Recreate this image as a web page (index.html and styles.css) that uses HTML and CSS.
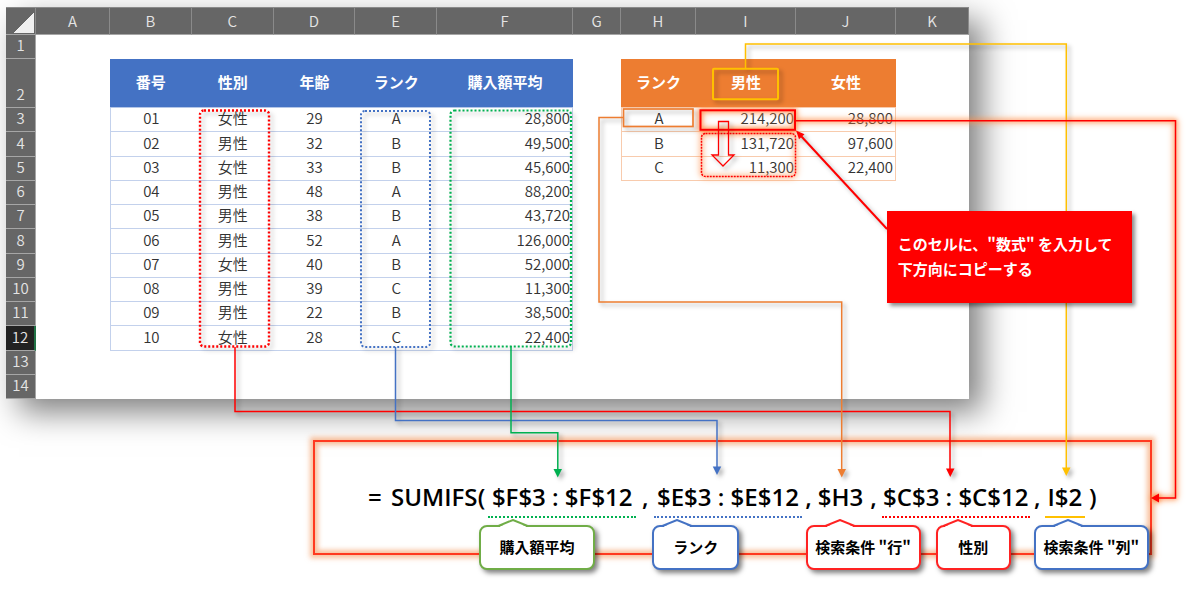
FILE: index.html
```html
<!DOCTYPE html>
<html lang="ja">
<head>
<meta charset="utf-8">
<title>SUMIFS 関数の解説</title>
<link rel="stylesheet" href="styles.css">
</head>
<body>
<main class="figure">
  <table class="sheet">
    <colgroup>
      <col class="w-head"><col class="w-a"><col class="w-b"><col class="w-b"><col class="w-b"><col class="w-b"><col class="w-f"><col class="w-g"><col class="w-h"><col class="w-i"><col class="w-i"><col class="w-k">
    </colgroup>
    <thead>
      <tr><th class="corner"></th><th>A</th><th>B</th><th>C</th><th>D</th><th>E</th><th>F</th><th>G</th><th>H</th><th>I</th><th>J</th><th>K</th></tr>
    </thead>
    <tbody>
      <tr><th>1</th><td></td><td></td><td></td><td></td><td></td><td></td><td></td><td></td><td></td><td></td><td></td></tr>
      <tr class="titles"><th>2</th><td></td><td class="blue">番号</td><td class="blue">性別</td><td class="blue">年齢</td><td class="blue">ランク</td><td class="blue">購入額平均</td><td></td><td class="orange">ランク</td><td class="orange">男性</td><td class="orange">女性</td><td></td></tr>
      <tr><th>3</th><td></td><td class="b first">01</td><td class="b">女性</td><td class="b">29</td><td class="b">A</td><td class="b num last">28,800</td><td></td><td class="o first">A</td><td class="o num">214,200</td><td class="o num last">28,800</td><td></td></tr>
      <tr><th>4</th><td></td><td class="b first">02</td><td class="b">男性</td><td class="b">32</td><td class="b">B</td><td class="b num last">49,500</td><td></td><td class="o first">B</td><td class="o num">131,720</td><td class="o num last">97,600</td><td></td></tr>
      <tr><th>5</th><td></td><td class="b first">03</td><td class="b">女性</td><td class="b">33</td><td class="b">B</td><td class="b num last">45,600</td><td></td><td class="o first">C</td><td class="o num">11,300</td><td class="o num last">22,400</td><td></td></tr>
      <tr><th>6</th><td></td><td class="b first">04</td><td class="b">男性</td><td class="b">48</td><td class="b">A</td><td class="b num last">88,200</td><td></td><td></td><td></td><td></td><td></td></tr>
      <tr><th>7</th><td></td><td class="b first">05</td><td class="b">男性</td><td class="b">38</td><td class="b">B</td><td class="b num last">43,720</td><td></td><td></td><td></td><td></td><td></td></tr>
      <tr><th>8</th><td></td><td class="b first">06</td><td class="b">男性</td><td class="b">52</td><td class="b">A</td><td class="b num last">126,000</td><td></td><td></td><td></td><td></td><td></td></tr>
      <tr><th>9</th><td></td><td class="b first">07</td><td class="b">女性</td><td class="b">40</td><td class="b">B</td><td class="b num last">52,000</td><td></td><td></td><td></td><td></td><td></td></tr>
      <tr><th>10</th><td></td><td class="b first">08</td><td class="b">男性</td><td class="b">39</td><td class="b">C</td><td class="b num last">11,300</td><td></td><td></td><td></td><td></td><td></td></tr>
      <tr><th>11</th><td></td><td class="b first">09</td><td class="b">男性</td><td class="b">22</td><td class="b">B</td><td class="b num last">38,500</td><td></td><td></td><td></td><td></td><td></td></tr>
      <tr><th class="current">12</th><td></td><td class="b first">10</td><td class="b">女性</td><td class="b">28</td><td class="b">C</td><td class="b num last">22,400</td><td></td><td></td><td></td><td></td><td></td></tr>
      <tr><th>13</th><td></td><td></td><td></td><td></td><td></td><td></td><td></td><td></td><td></td><td></td><td></td></tr>
      <tr><th>14</th><td></td><td></td><td></td><td></td><td></td><td></td><td></td><td></td><td></td><td></td><td></td></tr>
    </tbody>
  </table>

  <section class="formula">
    <span>=</span>
    <span>SUMIFS</span>
    <span class="open">(</span>
    <span class="arg line-green">$F$3 : $F$12
      <span class="note note-sum">購入額平均<svg class="tip" viewBox="0 0 30 9"><path class="tip-fill" d="M2 7.500L15 2L28 7.500V9H2z"/><path d="M0 7L15 1L30 7"/></svg></span>
    </span>
    <span class="comma">,</span>
    <span class="arg line-blue">$E$3 : $E$12
      <span class="note note-rank">ランク<svg class="tip" viewBox="0 0 30 9"><path class="tip-fill" d="M2 7.500L15 2L28 7.500V9H2z"/><path d="M0 7L15 1L30 7"/></svg></span>
    </span>
    <span class="comma">,</span>
    <span class="arg">$H3
      <span class="note note-row">検索条件 "行"<svg class="tip" viewBox="0 0 30 9"><path class="tip-fill" d="M2 7.500L15 2L28 7.500V9H2z"/><path d="M0 7L15 1L30 7"/></svg></span>
    </span>
    <span class="comma">,</span>
    <span class="arg line-red">$C$3 : $C$12
      <span class="note note-sex">性別<svg class="tip" viewBox="0 0 30 9"><path class="tip-fill" d="M2 7.500L15 2L28 7.500V9H2z"/><path d="M0 7L15 1L30 7"/></svg></span>
    </span>
    <span class="comma">,</span>
    <span class="arg line-gold">I$2
      <span class="note note-col">検索条件 "列"<svg class="tip" viewBox="0 0 30 9"><path class="tip-fill" d="M2 7.500L15 2L28 7.500V9H2z"/><path d="M0 7L15 1L30 7"/></svg></span>
    </span>
    <span class="close">)</span>
  </section>

  <svg class="links" viewBox="0 0 1200 590" preserveAspectRatio="none" aria-hidden="true">
    <g class="shadow">
      <rect class="dots red" x="200" y="110.500" width="69" height="236" rx="4" stroke-width="2.400"/>
      <rect class="dots blue-line" x="361" y="111" width="69" height="236" rx="4" stroke-width="2"/>
      <rect class="dots green" x="450.500" y="110.500" width="120.500" height="236" rx="4" stroke-width="2.200"/>
      <path class="red" d="M235 347V411.500H950V469"/>
      <path class="red-fill" d="M946 468.500h8.500l-4.250 8.500z"/>
      <path class="blue-line" d="M395.500 347V420.500H717V467"/>
      <path class="blue-fill" d="M712.750 466.500h8.500l-4.250 8.500z"/>
      <path class="green" d="M511 346V432.700H557.800V470"/>
      <path class="green-fill" d="M553.500 469h8.500l-4.250 8.500z"/>
      <path class="orange-line" d="M623 117.500H599V302H841.700V470"/>
      <path class="orange-fill" d="M837.500 469h8.500l-4.250 8.500z"/>
      <rect class="orange-line" x="623.500" y="109" width="69.500" height="17.500" stroke-width="1.700"/>
      <path class="gold" d="M745.500 68.500V44H1066.300V468"/>
      <path class="gold-fill" d="M1062 467.500h8.500l-4.250 8.500z"/>
      <rect class="gold" x="713" y="68.700" width="65" height="30.500" rx="1" stroke-width="2"/>
    </g>
    <g class="glow">
      <rect class="red" x="700.500" y="110.300" width="94.500" height="19.500" stroke-width="2"/>
      <rect class="red dots-fine" x="701.500" y="133.500" width="94" height="43" rx="4"/>
      <path class="red" d="M796 120.700H1175.500V498H1158"/>
      <path class="red-fill" d="M1159 493.500v9l-8-4.500z"/>
    </g>
    <g class="shadow">
      <path class="red" d="M718.500 121.500h10v33.500h5.500l-11 11l-11-11h6.500z" stroke-width="1.300"/>
      <path class="red" d="M887 229L801 136" stroke-width="2"/>
      <path class="red-fill" d="M796 130.500l8.500 3.700l-5.500 5z"/>
    </g>
  </svg>

  <p class="callout">このセルに、"数式" を入力して<br>下方向にコピーする</p>
</main>
</body>
</html>
```
FILE: styles.css
```css
* { box-sizing: border-box; }

body {
  margin: 0;
  background: #fff;
  font-family: "Noto Sans CJK JP", sans-serif;
  font-size: 15px;
  color: #333;
}

.figure {
  position: relative;
  overflow: hidden;
  padding: 7px 0 36px;
}

/* worksheet */
.sheet {
  width: 80.25%;
  margin-left: 0.5%;
  table-layout: fixed;
  border-collapse: separate;
  border-spacing: 0;
  background: #fff;
  box-shadow: 13px 13px 30px rgba(0, 0, 0, 0.5);
}

.w-head { width: 3.12%; }
.w-a { width: 7.68%; }
.w-b { width: 8.49%; }
.w-f { width: 14.12%; }
.w-g { width: 4.98%; }
.w-h { width: 7.79%; }
.w-i { width: 10.38%; }
.w-k { width: 7.58%; }

.sheet th,
.sheet td {
  height: 24px;
  padding: 0 0 3px;
  font-weight: 350;
  line-height: 20px;
  text-align: center;
  white-space: nowrap;
}

.sheet th {
  background: #666;
  color: #e4e4e4;
  border-right: 1px solid #a6a6a6;
  border-bottom: 1px solid #a6a6a6;
}

.sheet thead th {
  height: 28px;
  padding: 0;
  border-top: 1px solid #8a8a8a;
  border-right-color: #8a8a8a;
}

.sheet tbody tr:nth-child(4n) > * { height: 25px; }

.sheet .titles > * { height: 49px; }
.sheet .titles th { vertical-align: bottom; }

.sheet .corner {
  background: linear-gradient(135deg, #666 50%, #f0f0f0 50%) right 1px bottom 1px / 20px 20px no-repeat #666;
}

.sheet .current {
  background: #222;
  border-right: 2px solid #217346;
}

.sheet .blue,
.sheet .orange {
  color: #fff;
  font-weight: 700;
}

.sheet .blue { background: #4472c4; border-bottom: 1px solid #b4c6e7; }
.sheet .orange { background: #ed7d31; border-bottom: 1px solid #f8cbad; }

.sheet .b { border-bottom: 1px solid #c3d1ec; }
.sheet .b.first { border-left: 1px solid #c3d1ec; }
.sheet .b.last { border-right: 1px solid #c3d1ec; }
.sheet .o { border-bottom: 1px solid #f8cbad; }
.sheet .o.first { border-left: 1px solid #f8cbad; }
.sheet .o.last { border-right: 1px solid #f8cbad; }

.sheet .num {
  padding-right: 2px;
  text-align: right;
}

/* formula */
.formula {
  display: grid;
  grid-template-columns:
    minmax(0, 23fr) minmax(0, 84fr) minmax(0, 13fr) minmax(0, 148fr)
    minmax(0, 18fr) minmax(0, 147fr) minmax(0, 14fr) minmax(0, 50fr)
    minmax(0, 16fr) minmax(0, 148fr) minmax(0, 15fr) minmax(0, 40fr)
    minmax(0, 65fr);
  width: 69.9%;
  margin: 41px 0 0 26.1%;
  padding: 38px 0 35px 4.4%;
  border: 2px solid #ff3a20;
  box-shadow: 0 0 5px 3px rgba(244, 150, 90, 0.6), inset 0 0 5px 3px rgba(244, 150, 90, 0.6);
  color: #000;
  font-family: "Open Sans", sans-serif;
  font-size: 24px;
  font-weight: 600;
  line-height: 34px;
  white-space: nowrap;
}

.arg {
  position: relative;
  height: 38px;
  text-align: center;
}

.open,
.comma { text-align: center; }
.close { padding-left: 4px; }

.line-green { border-bottom: 2px dotted #00b050; }
.line-blue { border-bottom: 2px dotted #4472c4; }
.line-red { border-bottom: 2px dotted #f00; }
.line-gold { border-bottom: 2px solid #ffc000; }

.note {
  position: absolute;
  top: 45px;
  height: 45px;
  border: 2px solid #f22;
  border-radius: 8px;
  background: #fff;
  box-shadow: 3px 3px 5px rgba(0, 0, 0, 0.5);
  font-family: "Noto Sans CJK JP", sans-serif;
  font-size: 15px;
  font-weight: 700;
  line-height: 39px;
  text-align: center;
  stroke: #f22;
}

.note-sum { left: -9px; width: 116px; border-color: #70ad47; stroke: #70ad47; }
.note-rank { left: -2px; width: 87px; border-color: #4472c4; stroke: #4472c4; }
.note-row { left: -10px; width: 115px; }
.note-sex { left: 54px; width: 75px; }
.note-col { left: -11px; width: 115px; border-color: #4472c4; stroke: #4472c4; }

.tip {
  position: absolute;
  top: -8px;
  left: 17px;
  width: 30px;
  height: 9px;
  fill: none;
  stroke-width: 2;
}

.tip-fill { fill: #fff; stroke: none; }
.note-rank .tip { left: 8px; }
.note-sex .tip { left: 5px; }

/* connectors */
.links {
  position: absolute;
  top: 0;
  left: 0;
  width: 100%;
  height: 590px;
  fill: none;
  stroke-width: 1.5;
  pointer-events: none;
}

.shadow { filter: drop-shadow(3px 3px 2px rgba(0, 0, 0, 0.3)); }
.glow { filter: drop-shadow(0 0 2px #ff8038) drop-shadow(0 0 3px #ff9048); }

.red { stroke: #f00; }
.blue-line { stroke: #4472c4; }
.green { stroke: #00b050; }
.orange-line { stroke: #ed7d31; }
.gold { stroke: #ffc000; }
.red-fill { fill: #f00; }
.blue-fill { fill: #4472c4; }
.green-fill { fill: #00b050; }
.orange-fill { fill: #ed7d31; }
.gold-fill { fill: #ffc000; }
.dots { stroke-dasharray: 2 2; }
.dots-fine { stroke-dasharray: 2 1; }

.callout {
  position: absolute;
  top: 211px;
  left: 73.9%;
  width: 20.4%;
  margin: 0;
  padding: 20px 11px 22px;
  background: #f00;
  box-shadow: 3px 3px 4px rgba(0, 0, 0, 0.45);
  color: #fff;
  font-weight: 700;
  line-height: 25px;
  white-space: nowrap;
}
```
